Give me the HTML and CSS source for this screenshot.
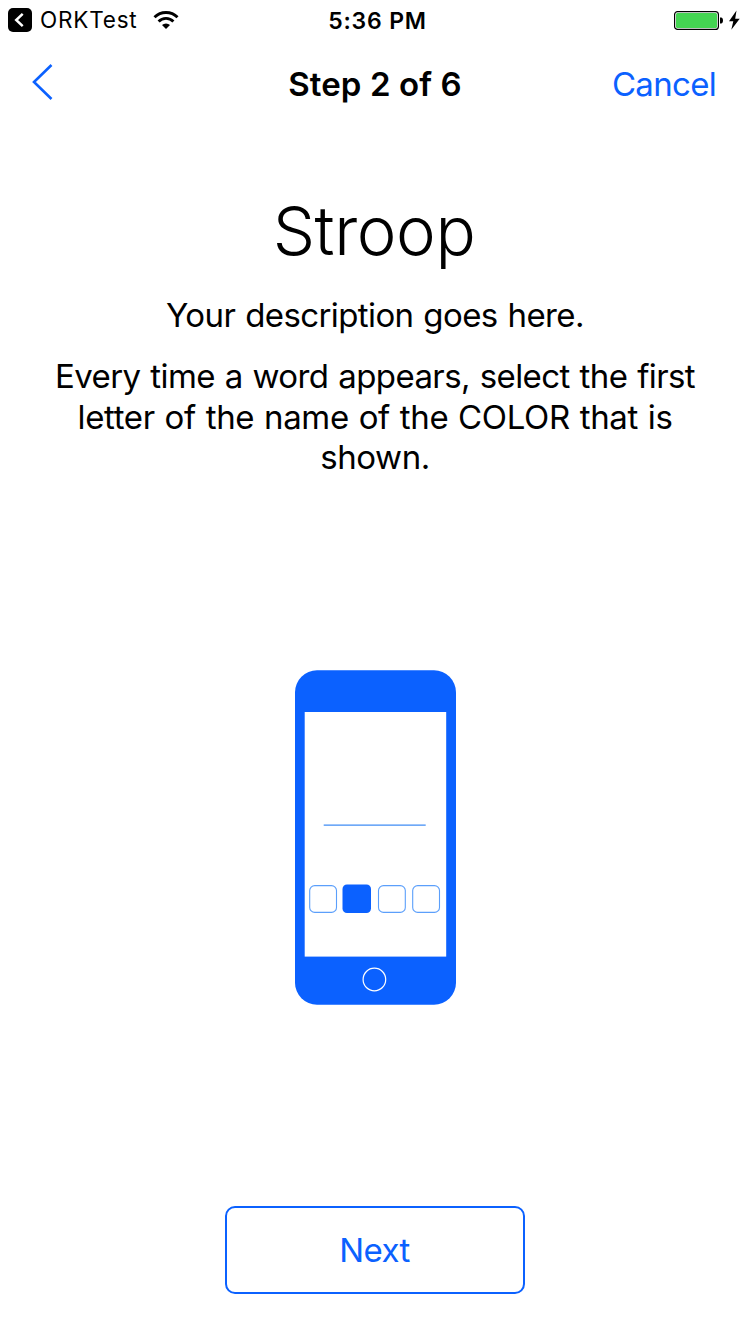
FILE: index.html
```html
<!DOCTYPE html>
<html lang="en">
<head>
<meta charset="utf-8">
<title>Stroop</title>
<link rel="stylesheet" href="styles.css">
</head>
<body>
<div class="screen">
  <header class="status">
    <div class="status-left">
      <svg class="back-app" width="24" height="24" viewBox="0 0 24 24"><rect width="24" height="24" rx="5"/><path d="M14.7 5.8 8.2 12l6.5 6.2" fill="none" stroke="#fff" stroke-width="2.5"/></svg>
      <span class="app-name">ORKTest</span>
      <svg class="wifi" width="26" height="20" viewBox="0 0 26 20"><g fill="none" stroke="#000" stroke-width="2.9"><path d="M1.5 7.3a16.2 16.2 0 0 1 23 0"/><path d="M5.6 11.500a10.400 10.400 0 0 1 14.800 0"/></g><path d="M9 15a5.800 5.800 0 0 1 8 0l-4 4z"/></svg>
    </div>
    <div class="clock">5:36 PM</div>
    <div class="status-right">
      <svg width="68" height="22" viewBox="0 0 68 22"><rect x=".6" y="1.6" width="43.8" height="17.8" rx="3" fill="#fff" stroke="#000" stroke-width="1.2"/><rect x="2" y="3" width="41" height="15" rx="1.5" fill="#44d552"/><path d="M46 7.5h1c1.5 0 2 1.5 2 3s-.5 3-2 3h-1z"/><path d="m62.5.5-7.500 10.700h4.300L57.300 19.700l8.400-10.900h-4.500z"/></svg>
    </div>
  </header>
  <nav class="nav">
    <svg class="back" width="24" height="40" viewBox="0 0 24 40"><path d="M20.500 3 3 20l17.500 17" fill="none" stroke="#0b61ff" stroke-width="2.600"/></svg>
    <h1 class="nav-title">Step 2 of 6</h1>
    <a class="cancel">Cancel</a>
  </nav>
  <main class="content">
    <h2 class="title">Stroop</h2>
    <p class="text description">Your description goes here.</p>
    <p class="text instructions"><span class="line first">Every time a word appears, select the first</span> <span class="line second">letter of the name of the COLOR that is</span> <span class="line third">shown.</span></p>
    <svg class="phone" width="161" height="335" viewBox="0 0 161 335">
      <rect y=".3" width="161" height="334.400" rx="22" fill="#0b61ff"/>
      <rect x="9.700" y="42" width="141.500" height="244.600" fill="#fff"/>
      <path d="M28.700 155.200h102" stroke="#3f8cf5" stroke-width="1.300"/>
      <g fill="#fff" stroke="#5b9ffb" stroke-width="1.100"><rect x="14.700" y="215.600" width="26.800" height="26.800" rx="5"/><rect x="83.500" y="215.600" width="26.800" height="26.800" rx="5"/><rect x="117.700" y="215.600" width="26.800" height="26.800" rx="5"/></g>
      <rect x="47.500" y="214.500" width="28.500" height="28.500" rx="4.500" fill="#0b61ff"/>
      <circle cx="79.400" cy="309.500" r="11.300" fill="none" stroke="#fff" stroke-width="1.200"/>
    </svg>
  </main>
  <footer class="footer"><button class="next">Next</button></footer>
</div>
</body>
</html>
```
FILE: styles.css
```css
body { margin: 0; background: #fff; color: #000; font-family: Inter, "Liberation Sans", sans-serif; }
.screen { width: 750px; height: 1334px; display: flex; flex-direction: column; overflow: hidden; }
.status { height: 40px; display: grid; grid-template-columns: 1fr auto 1fr; align-items: start; font-size: 22.5px; line-height: 40px; }
.status-left { display: flex; align-items: center; height: 40px; padding-left: 8px; }
.app-name { margin-left: 8px; letter-spacing: 0.8px; }
.wifi { margin-left: 15.5px; }
.clock { font-size: 23px; font-weight: 600; letter-spacing: 0.8px; padding: 1px 0 0 5px; }
.status-right { display: flex; justify-content: flex-end; padding: 10px 8px 0 0; }
.nav { height: 88px; display: grid; grid-template-columns: 1fr auto 1fr; align-items: center; font-size: 33px; line-height: 40px; }
.back { margin: 0 0 4px 30.6px; }
.nav-title { margin: 0; font-size: 33px; font-weight: 600; letter-spacing: 0.1px; }
.cancel { color: #0b61ff; justify-self: end; padding-right: 34px; letter-spacing: -0.7px; }
.content { display: flex; flex-direction: column; align-items: center; padding-top: 63px; }
.title { margin: 0; padding-right: 2px; font-size: 67px; line-height: 80px; font-weight: 340; letter-spacing: -0.4px; }
.text { margin: 0; font-size: 33px; line-height: 40px; text-align: center; }
.description { margin-top: 24px; letter-spacing: -0.6px; word-spacing: 1.2px; }
.instructions { margin-top: 21px; }
.line { display: block; white-space: nowrap; }
.first { line-height: 40px; letter-spacing: -0.6px; word-spacing: 1.2px; }
.second { line-height: 42px; letter-spacing: -0.35px; word-spacing: 0.9px; }
.third { line-height: 38px; letter-spacing: -0.4px; }
.phone { margin-top: 194px; }
.footer { margin-top: auto; display: flex; justify-content: center; padding-bottom: 40px; }
.next { box-sizing: border-box; width: 300px; height: 88px; padding: 0 1px 0 0; border: 2px solid #0b61ff; border-radius: 10px; background: #fff; color: #0b61ff; font-family: inherit; font-size: 33px; line-height: 40px; letter-spacing: -0.6px; }
```
